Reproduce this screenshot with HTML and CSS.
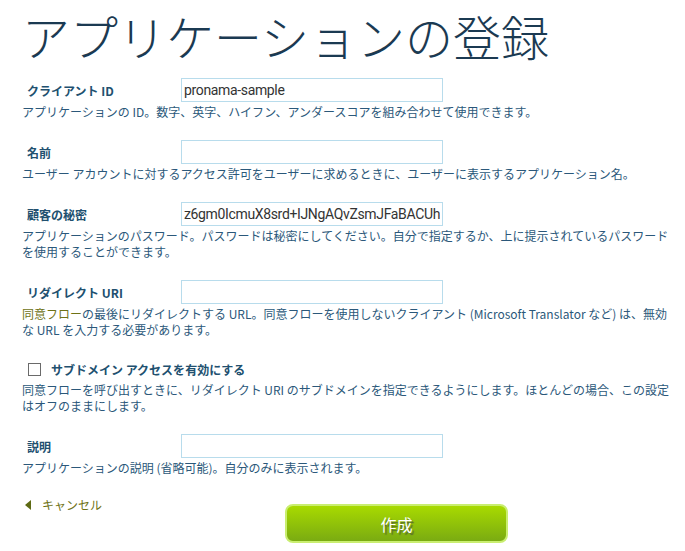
FILE: index.html
```html
<!DOCTYPE html>
<html lang="ja">
<head>
  <meta charset="UTF-8">
  <title>アプリケーションの登録</title>
  <link rel="stylesheet" href="styles.css">
</head>
<body>

<div class="page">
  <h1 class="title">アプリケーションの登録</h1>

  <form class="reg-form">
    <div class="field">
      <div class="row">
        <label class="label" for="clientId">クライアント ID</label>
        <input class="text-input" id="clientId" type="text" value="pronama-sample">
      </div>
      <p class="desc">アプリケーションの ID。数字、英字、ハイフン、アンダースコアを組み合わせて使用できます。</p>
    </div>

    <div class="field">
      <div class="row">
        <label class="label" for="appName">名前</label>
        <input class="text-input" id="appName" type="text">
      </div>
      <p class="desc">ユーザー アカウントに対するアクセス許可をユーザーに求めるときに、ユーザーに表示するアプリケーション名。</p>
    </div>

    <div class="field">
      <div class="row">
        <label class="label" for="secret">顧客の秘密</label>
        <input class="text-input" id="secret" type="text" value="z6gm0IcmuX8srd+IJNgAQvZsmJFaBACUh">
      </div>
      <p class="desc">アプリケーションのパスワード。パスワードは秘密にしてください。自分で指定するか、上に提示されているパスワードを使用することができます。</p>
    </div>

    <div class="field">
      <div class="row">
        <label class="label" for="redirect">リダイレクト URI</label>
        <input class="text-input" id="redirect" type="text">
      </div>
      <p class="desc"><span class="term">同意フロー</span>の最後にリダイレクトする URL。同意フローを使用しないクライアント (Microsoft Translator など) は、無効な URL を入力する必要があります。</p>
    </div>

    <div class="field">
      <label class="check-row">
        <input class="check" type="checkbox">
        <span class="label">サブドメイン アクセスを有効にする</span>
      </label>
      <p class="desc">同意フローを呼び出すときに、リダイレクト URI のサブドメインを指定できるようにします。ほとんどの場合、この設定はオフのままにします。</p>
    </div>

    <div class="field">
      <div class="row">
        <label class="label" for="description">説明</label>
        <input class="text-input" id="description" type="text">
      </div>
      <p class="desc">アプリケーションの説明 (省略可能)。自分のみに表示されます。</p>
    </div>

    <div class="actions">
      <a class="cancel" href="#"><span class="arrow"></span>キャンセル</a>
      <button class="create-btn" type="button">作成</button>
    </div>
  </form>
</div>

</body>
</html>
```

FILE: styles.css
```css
body {
  margin: 0;
  font-family: "Noto Sans CJK JP", sans-serif;
  background: #fff;
}
.page { width: 652px; padding-left: 22px; }

.title {
  margin: 0;
  padding-top: 1px;
  font-size: 48px;
  font-weight: 300;
  line-height: 68px;
  color: #1b3a52;
}

.reg-form { margin-top: 9px; }
.field { margin-bottom: 20px; }
.row {
  display: grid;
  grid-template-columns: 159px 262px;
  align-items: center;
  height: 24px;
}
.label {
  padding-left: 5px;
  font-size: 12px;
  font-weight: bold;
  color: #21506f;
}
.text-input {
  box-sizing: border-box;
  width: 262px; height: 24px;
  margin: 0; padding: 0 2px;
  border: 1px solid #b8dcec;
  font-family: Roboto, "Liberation Sans", sans-serif;
  font-size: 14px;
  letter-spacing: -0.35px;
  color: #333;
  outline: none;
}
.desc {
  margin: 2px 0 0;
  font-size: 12px;
  line-height: 16px;
  color: #2b587a;
}
.term { color: #6e7216; }

.check-row {
  display: flex;
  align-items: center;
  height: 22px;
  padding-left: 6px;
  margin-top: 1px;
}
.check-row .label { padding-left: 10px; }
.check {
  appearance: none;
  width: 13px; height: 13px;
  margin: 0;
  border: 1px solid #6a6a6a;
  background: #fff;
}

.actions {
  display: grid;
  grid-template-columns: 263px 223px;
  align-items: start;
  margin-top: 9px;
}
.cancel {
  display: flex;
  align-items: center;
  padding-left: 3px;
  font-size: 12px;
  color: #6e7216;
  text-decoration: none;
}
.arrow {
  width: 0; height: 0;
  margin-right: 11px;
  border-top: 5px solid transparent;
  border-bottom: 5px solid transparent;
  border-right: 6px solid #5e6a14;
}
.create-btn {
  height: 39px;
  margin-top: 8px;
  border: 2px solid #c9ee70;
  border-radius: 8px;
  background: linear-gradient(#a8da00, #7aab12);
  color: #fff;
  font-family: "Noto Sans CJK JP", sans-serif;
  font-size: 16px;
  text-shadow: 2px 2px 1px #5a6e2a;
  cursor: pointer;
}
```
